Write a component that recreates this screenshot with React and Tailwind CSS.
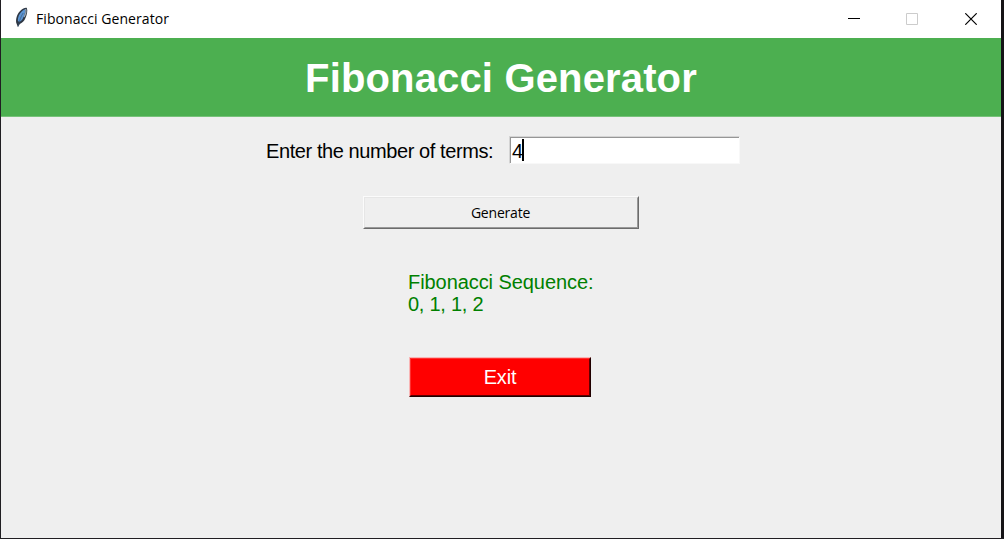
function Feather() {
  return (
    <svg className="ml-[13px] mt-[7px] h-[21px] w-[15px] shrink-0" viewBox="0 0 14 21" preserveAspectRatio="none">
      <path d="M3.6 20 2 15.5C1.6 11 3.2 6 6.4 3.2 8 1.4 10.6.4 12 .9 13 3.5 12 8 10.6 11.2 9.6 14 7.6 16 5.4 17Z" fill="#2e3744" />
      <path d="M3.6 13.8C3.4 10.5 5 6.3 7.4 4.2 8.6 3 10 2.4 10.4 2.6 10.9 4.5 9.6 9.2 8.4 11.2 7.4 13.2 6 14.6 4.8 15Z" fill="#5b94d2" />
      <path d="M10.8 2C11.6 4 10.6 7.6 9.4 10" fill="none" stroke="#98a4b0" strokeWidth="1.2" />
      <path d="M8.6 6C6.6 9 5.2 13 4 19.6" fill="none" stroke="#34506f" strokeWidth=".6" />
    </svg>
  );
}

function TitleBar() {
  return (
    <header className="flex h-[38px] shrink-0 bg-white">
      <Feather />
      <span className="ml-[7px] w-[140px] whitespace-nowrap font-['Open_Sans',sans-serif] text-[14px] leading-[38px] tracking-[0.06px] text-black">Fibonacci Generator</span>
      <div className="ml-auto flex">
        <button aria-label="Minimize" className="flex w-[58px] items-center justify-center">
          <svg className="h-3 w-3" viewBox="0 0 12 12" shapeRendering="crispEdges"><path d="M0 5h12v1H0z" fill="#000" /></svg>
        </button>
        <button aria-label="Maximize" className="flex w-[58px] items-center justify-center">
          <svg className="h-3 w-3" viewBox="0 0 12 12"><path d="M.5.5h11v11H.5z" fill="none" stroke="#ccc" /></svg>
        </button>
        <button aria-label="Close" className="flex w-[60px] items-center justify-center">
          <svg className="h-3 w-3" viewBox="0 0 12 12"><path d="M.3.3 11.7 11.7M11.7.3.3 11.7" stroke="#000" strokeWidth="1.2" /></svg>
        </button>
      </div>
    </header>
  );
}

export default function App() {
  return (
    <div className="flex h-[539px] w-[1004px] border-b border-l border-[#201e22] bg-[#151316] font-['Liberation_Sans',Arial,sans-serif]">
      <main className="flex w-[1000px] flex-col bg-[#efefef]">
        <TitleBar />
        <div className="flex h-[79px] shrink-0 items-center justify-center border-b border-[#77c27a] bg-[#4caf50]">
          <h1 className="pt-[2px] whitespace-nowrap text-[40px] leading-[76px] font-bold tracking-[0.15px] text-white">Fibonacci Generator</h1>
        </div>
        <div className="mt-[19px] ml-[265px] flex h-[28px] shrink-0">
          <label className="w-[243px] whitespace-nowrap text-[20px] leading-[30px] tracking-[-0.41px] text-black">Enter the number of terms:</label>
          <div className="flex h-[28px] w-[231px] border border-t-[#d4d4d4] border-l-[#d4d4d4] border-r-[#f8f8f8] border-b-[#f8f8f8] bg-white">
            <div className="flex h-[26px] w-full border-t border-l border-[#969696]">
              <span className="ml-px text-[20px] leading-[26px] tracking-[-0.8px] text-black">4</span>
              <span className="mt-[1px] h-[22px] w-[2px] bg-black" />
            </div>
          </div>
        </div>
        <button className="mt-[32px] ml-[362px] h-[33px] w-[276px] shrink-0 border border-t-[#fbfbfb] border-l-[#fbfbfb] border-r-[#6c6c6c] border-b-[#6c6c6c] bg-[#efefef] font-['Open_Sans',sans-serif] text-[14px] text-black">
          <span className="flex h-full items-center justify-center border border-t-[#e6e6e6] border-l-[#e6e6e6] border-r-[#999] border-b-[#999] pr-px tracking-[-0.2px]">Generate</span>
        </button>
        <div className="mt-[42px] ml-[407px] shrink-0 whitespace-nowrap text-[20px] leading-[22px] text-[#008000]">
          <p className="tracking-[-0.07px]">Fibonacci Sequence:</p>
          <p className="tracking-[-0.25px]">0, 1, 1, 2</p>
        </div>
        <button className="mt-[42px] ml-[408px] h-[40px] w-[182px] shrink-0 border border-t-[#f8b5b5] border-l-[#f8b5b5] border-r-[#200000] border-b-[#200000] bg-[#ff0000] text-[20px] text-white">
          <span className="flex h-full items-center justify-center border border-t-[#ff3030] border-l-[#ff3030] border-r-[#600000] border-b-[#600000] tracking-[-0.2px]">Exit</span>
        </button>
      </main>
    </div>
  );
}
